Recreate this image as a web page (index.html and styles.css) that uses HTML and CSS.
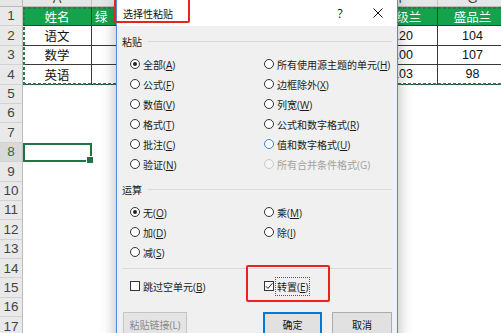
FILE: index.html
```html
<!DOCTYPE html>
<html lang="zh-CN">
<head>
<meta charset="utf-8">
<title>选择性粘贴</title>
<link rel="stylesheet" href="styles.css">
</head>
<body>
<div class="sheet">
  <div class="rowheads">
    <div class="corner"></div>
    <div class="rh">1</div><div class="rh">2</div><div class="rh">3</div><div class="rh">4</div>
    <div class="rh">5</div><div class="rh">6</div><div class="rh">7</div><div class="rh active">8</div>
    <div class="rh">9</div><div class="rh">10</div><div class="rh">11</div><div class="rh">12</div>
    <div class="rh">13</div><div class="rh">14</div><div class="rh">15</div><div class="rh">16</div>
    <div class="rh">17</div>
  </div>
  <div class="cells">
    <div class="ch">A</div><div class="ch">B</div><div class="ch">C</div><div class="ch">D</div><div class="ch">E</div><div class="ch">F</div><div class="ch">G</div>
    <div class="c h">姓名</div><div class="c h b1">绿兰</div><div class="c h">春兰</div><div class="c h">蕙兰</div><div class="c h">建兰</div><div class="c h">优级兰</div><div class="c h">盛品兰</div>
    <div class="c">语文</div><div class="c">95</div><div class="c">88</div><div class="c">92</div><div class="c">110</div><div class="c">120</div><div class="c">104</div>
    <div class="c">数学</div><div class="c">90</div><div class="c">96</div><div class="c">85</div><div class="c">101</div><div class="c">100</div><div class="c">107</div>
    <div class="c">英语</div><div class="c">87</div><div class="c">93</div><div class="c">99</div><div class="c">105</div><div class="c">103</div><div class="c">98</div>
    <div class="sel"></div>
  </div>
  <div class="marquee"></div>
</div>

<div class="dialog">
  <div class="titlebar">
    <div class="title">选择性粘贴</div>
    <div class="tbtn help">?</div>
    <div class="tbtn close">
      <svg width="10" height="10" viewBox="0 0 10 10"><path d="M0.5 0.5 L9.5 9.5 M9.5 0.5 L0.5 9.5" stroke="#111" stroke-width="1" fill="none"/></svg>
    </div>
  </div>
  <div class="body">
    <div class="group"><span>粘贴</span><span class="line"></span></div>
    <div class="opts">
      <div class="opt"><span class="radio on"></span><span>全部(<u>A</u>)</span></div>
      <div class="opt"><span class="radio"></span><span>所有使用源主题的单元(<u>H</u>)</span></div>
      <div class="opt"><span class="radio"></span><span>公式(<u>F</u>)</span></div>
      <div class="opt"><span class="radio"></span><span>边框除外(<u>X</u>)</span></div>
      <div class="opt"><span class="radio"></span><span>数值(<u>V</u>)</span></div>
      <div class="opt"><span class="radio"></span><span>列宽(<u>W</u>)</span></div>
      <div class="opt"><span class="radio"></span><span>格式(<u>T</u>)</span></div>
      <div class="opt"><span class="radio"></span><span>公式和数字格式(<u>R</u>)</span></div>
      <div class="opt"><span class="radio"></span><span>批注(<u>C</u>)</span></div>
      <div class="opt"><span class="radio hover"></span><span>值和数字格式(<u>U</u>)</span></div>
      <div class="opt"><span class="radio"></span><span>验证(<u>N</u>)</span></div>
      <div class="opt disabled"><span class="radio"></span><span>所有合并条件格式(G)</span></div>
    </div>
    <div class="group"><span>运算</span><span class="line"></span></div>
    <div class="opts">
      <div class="opt"><span class="radio on"></span><span>无(<u>O</u>)</span></div>
      <div class="opt"><span class="radio"></span><span>乘(<u>M</u>)</span></div>
      <div class="opt"><span class="radio"></span><span>加(<u>D</u>)</span></div>
      <div class="opt"><span class="radio"></span><span>除(<u>I</u>)</span></div>
      <div class="opt"><span class="radio"></span><span>减(<u>S</u>)</span></div>
    </div>
    <div class="sep"></div>
    <div class="opts checks">
      <div class="opt"><span class="cbox"></span><span>跳过空单元(<u>B</u>)</span></div>
      <div class="opt"><span class="cbox">
        <svg width="8" height="8" viewBox="0 0 8 8"><path d="M0.8 4.2 L3 6.4 L7.4 1.2" stroke="#222" stroke-width="1" fill="none"/></svg>
      </span><span class="focus">转置(<u>E</u>)</span></div>
    </div>
    <div class="buttons">
      <div class="btn disabled link">粘贴链接(L)</div>
      <div class="btn default ok">确定</div>
      <div class="btn cancel">取消</div>
    </div>
  </div>
</div>

<div class="anno anno-title"></div>
<div class="anno anno-tp"></div>
</body>
</html>
```

FILE: styles.css
```css
* { box-sizing: border-box; margin: 0; padding: 0; }
html, body { width: 501px; height: 333px; overflow: hidden; background: #fff; }
body {
  position: relative;
  font-family: "Liberation Sans", "Noto Sans CJK SC", sans-serif;
  color: #222;
}

/* spreadsheet */
.sheet { display: flex; margin-top: -13px; position: relative; }
.rowheads { display: flex; flex-direction: column; width: 23px; flex: none; }
.corner { height: 20px; flex: none; background: #e6e6e6; border-right: 1px solid #bcbcbc; border-bottom: 1px solid #bcbcbc; }
.rh {
  height: 19.4px; flex: none;
  background: #e9e9e9;
  border-right: 1px solid #bcbcbc;
  border-bottom: 1px solid #d2d2d2;
  font-size: 13.5px; color: #444; line-height: 1;
  display: flex; align-items: center; justify-content: center;
}
.rh.active { background: #d9d9d9; color: #217346; }
.cells {
  display: grid;
  grid-template-columns: repeat(5, 69px) 70px 70px;
  grid-template-rows: 20px repeat(17, 19.4px);
  flex: none;
}
.ch {
  background: #e6e6e6;
  border-right: 1px solid #c4c4c4;
  border-bottom: 1px solid #bcbcbc;
  font-size: 13px; color: #444; line-height: 14px;
  display: flex; align-items: flex-end; justify-content: center;
}
.c {
  border-right: 1px solid #3a3a3a;
  border-bottom: 1px solid #3a3a3a;
  display: flex; align-items: center; justify-content: center;
  font-size: 12.5px; color: #111; white-space: nowrap; overflow: hidden;
}
.c.h { background: #14a24c; color: #fff; }
.c.b1 { justify-content: flex-start; padding-left: 3px; letter-spacing: 20px; }
.sel { grid-row: 9; grid-column: 1; border: 2px solid #217346; position: relative; }
.sel::after {
  content: ""; position: absolute; right: -4px; bottom: -4px;
  width: 6px; height: 6px; background: #217346; border: 1px solid #fff;
}
.marquee {
  position: absolute; left: 23px; top: 20px; width: 485px; height: 77.6px;
  background:
    linear-gradient(90deg, #2a7a4b 60%, transparent 0) 0 0 / 5px 2px repeat-x,
    linear-gradient(90deg, #2a7a4b 60%, transparent 0) 0 100% / 5px 2px repeat-x,
    linear-gradient(180deg, #2a7a4b 60%, transparent 0) 0 0 / 2px 5px repeat-y,
    linear-gradient(180deg, #2a7a4b 60%, transparent 0) 100% 0 / 2px 5px repeat-y;
}

/* dialog */
.dialog {
  position: absolute; left: 116px; top: -1px; width: 282px; height: 350px;
  background: #f0f0f0;
  border: 1px solid #4a8fd8;
  box-shadow: 0 2px 14px rgba(0, 0, 0, 0.3);
  font-family: "Open Sans", "Noto Sans CJK SC", sans-serif;
  font-size: 10px; color: #1a1a1a;
}
.titlebar { height: 26px; background: #fff; display: flex; align-items: center; }
.title { flex: 1; padding-left: 6px; padding-top: 1px; font-size: 10px; color: #111; }
.tbtn { width: 38px; height: 26px; display: flex; align-items: center; justify-content: center; flex: none; }
.help { font-size: 12px; color: #111; }
.body { padding: 0 5px; }
.group { display: flex; align-items: center; height: 14px; margin-top: 8px; }
.group .line { flex: 1; height: 1px; background: #dadada; margin-left: 6px; }
.opts {
  display: grid; grid-template-columns: 134px 134px; grid-auto-rows: 20px;
  padding-left: 8px; margin-top: 6px;
}
.opt { display: flex; align-items: center; gap: 3px; white-space: nowrap; }
.opt u { text-decoration: underline; text-underline-offset: 1px; }
.radio {
  width: 10px; height: 10px; flex: none; position: relative;
  border: 1px solid #333; border-radius: 50%; background: #fff;
}
.radio.on::after {
  content: ""; position: absolute; left: 2px; top: 2px;
  width: 4px; height: 4px; border-radius: 50%; background: #222;
}
.radio.hover { border-color: #2f86d8; }
.opt.disabled { color: #a2a2a2; }
.opt.disabled .radio { border-color: #c8c8c8; background: #f4f4f4; }
.sep { height: 1px; background: #dadada; margin-top: 6px; }
.checks { margin-top: 7px; }
.cbox {
  width: 10px; height: 10px; flex: none;
  border: 1px solid #333; background: #fff;
  display: flex; align-items: center; justify-content: center;
}
.focus { outline: 1px dotted #555; outline-offset: 1px; }
.buttons { display: flex; margin-top: 16px; gap: 10px; }
.btn {
  height: 24px; display: flex; align-items: center; justify-content: center;
  background: #e1e1e1; border: 1px solid #adadad; color: #111;
}
.btn.link { width: 64px; margin-left: 1px; margin-right: auto; }
.btn.ok { width: 59px; }
.btn.cancel { width: 60px; }
.btn.disabled { background: #e4e4e4; border-color: #c4c4c4; color: #8a8a8a; }
.btn.default { border-color: #0078d7; box-shadow: inset 0 0 0 1px #0078d7; }

/* annotations */
.anno { position: absolute; border: 2px solid #e8241c; border-radius: 2px; }
.anno-title { left: 114px; top: -4px; width: 76px; height: 27px; }
.anno-tp { left: 246px; top: 265px; width: 84px; height: 37px; }
```
